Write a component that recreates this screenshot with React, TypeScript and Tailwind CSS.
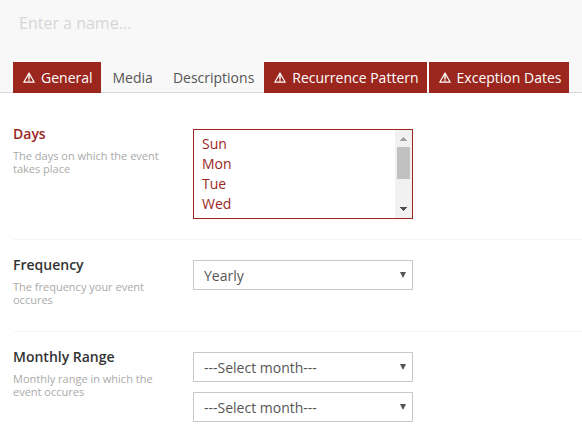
import { useState } from "react";
import type { ReactNode } from "react";

const tabs = [
  { name: "General", invalid: true },
  { name: "Media", invalid: false },
  { name: "Descriptions", invalid: false },
  { name: "Recurrence Pattern", invalid: true },
  { name: "Exception Dates", invalid: true },
];

const days = ["Sun", "Mon", "Tue", "Wed", "Thu", "Fri", "Sat"];
const months = [
  "January", "February", "March", "April", "May", "June",
  "July", "August", "September", "October", "November", "December",
];

function WarningIcon() {
  return (
    <svg aria-hidden="true" width="12" height="11" viewBox="0 0 12 11" className="shrink-0">
      <path d="M6 1 L11.2 10.2 H0.8 Z" fill="none" stroke="currentColor" strokeWidth="1.2" strokeLinejoin="round" />
      <path d="M6 3 V7.6 M6 8.2 V9.6" stroke="currentColor" strokeWidth="1.5" />
    </svg>
  );
}

function Field({
  id,
  label,
  hint,
  invalid = false,
  last = false,
  children,
}: {
  id: string;
  label: string;
  hint: string;
  invalid?: boolean;
  last?: boolean;
  children: ReactNode;
}) {
  return (
    <div className={`flex pb-5 ${last ? "" : "border-b border-[#f5f5f5]"}`}>
      <div className="w-[180px] shrink-0 pr-5 pb-[5px]">
        <label
          htmlFor={id}
          className={`block text-[14px] leading-[18px] font-semibold ${invalid ? "text-[#9b261d]" : "text-[#333]"}`}
        >
          {label}
        </label>
        <p className="mt-[6px] text-[11px] leading-[13px] text-[#aaa]">{hint}</p>
      </div>
      <div className="flex w-[220px] flex-col gap-[10px] pt-1">{children}</div>
    </div>
  );
}

function Dropdown({ id, label, options }: { id: string; label?: string; options: string[] }) {
  return (
    <div className="relative">
      <select
        id={id}
        aria-label={label}
        className="block h-[30px] w-full appearance-none rounded-none border border-[#c8c8c8] bg-white pl-[10px] pr-6 text-[14px] text-[#555]"
      >
        {options.map((o) => (
          <option key={o}>{o}</option>
        ))}
      </select>
      <svg
        aria-hidden="true"
        width="6"
        height="6"
        viewBox="0 0 6 6"
        className="pointer-events-none absolute top-3 right-[7px] text-[#555]"
      >
        <path d="M0 0 H6 L3 6 Z" fill="currentColor" />
      </svg>
    </div>
  );
}

export default function App() {
  const [active, setActive] = useState("General");

  return (
    <div className="font-['Open_Sans',sans-serif] text-[14px] text-[#555]">
      <header className="bg-[#f8f8f8]">
        <div className="px-[13px] pt-2 pb-6">
          <input
            type="text"
            aria-label="Name"
            placeholder="Enter a name..."
            className="block h-[30px] w-full bg-transparent px-[6px] text-[16px] outline-none placeholder:text-[#d6d6d6]"
          />
        </div>
        <nav role="tablist" className="flex gap-[2px] border-b border-[#dadada] px-[13px] whitespace-nowrap">
          {tabs.map((t) => (
            <button
              key={t.name}
              type="button"
              role="tab"
              aria-selected={active === t.name}
              onClick={() => setActive(t.name)}
              className={`-mb-px flex h-[31px] items-center gap-[6px] pr-2 pl-[10px] ${
                t.invalid ? "bg-[#9b261d] text-white" : "text-[#555]"
              }`}
            >
              {t.invalid && <WarningIcon />}
              {t.name}
            </button>
          ))}
        </nav>
      </header>

      <main className="flex flex-col gap-4 bg-white pt-8 pl-[13px]">
        <Field id="days" label="Days" hint="The days on which the event takes place" invalid>
          <div className="flex h-[90px] border border-[#9b261d] bg-white">
            <select
              id="days"
              multiple
              size={4}
              className="h-full min-w-0 flex-1 appearance-none overflow-y-scroll bg-white py-1 text-[14px] text-[#9b261d] outline-none [scrollbar-width:none]"
            >
              {days.map((d) => (
                <option key={d} className="h-5 px-2 py-0 leading-5">
                  {d}
                </option>
              ))}
            </select>
            <div aria-hidden="true" className="flex w-[17px] flex-col items-center bg-[#f1f1f1]">
              <svg width="17" height="17" viewBox="0 0 17 17" shapeRendering="crispEdges">
                <path d="M8 7h1v1h1v1h1v1h1v1H5v-1h1v-1h1v-1h1z" fill="#a3a3a3" />
              </svg>
              <div className="h-8 w-[13px] bg-[#c1c1c1]" />
              <svg width="17" height="17" viewBox="0 0 17 17" shapeRendering="crispEdges" className="mt-auto">
                <path d="M5 6h7v1h-1v1h-1v1H9v1H8V9H7V8H6V7H5z" fill="#505050" />
              </svg>
            </div>
          </div>
        </Field>
        <Field id="frequency" label="Frequency" hint="The frequency your event occures">
          <Dropdown id="frequency" options={["Yearly", "Monthly", "Weekly", "Daily"]} />
        </Field>
        <Field id="month-from" label="Monthly Range" hint="Monthly range in which the event occures" last>
          <Dropdown id="month-from" options={["---Select month---", ...months]} />
          <Dropdown id="month-to" label="Monthly range end" options={["---Select month---", ...months]} />
        </Field>
      </main>
    </div>
  );
}
